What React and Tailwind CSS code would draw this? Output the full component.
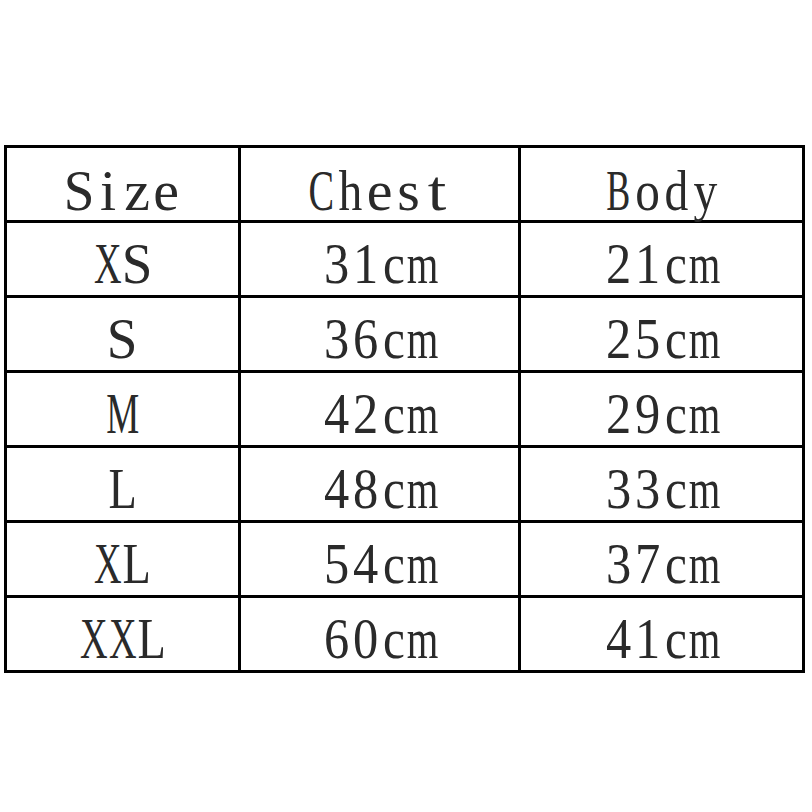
import React from "react";

const SCALE = {
  S: "scale-x-[0.95]",
  i: "scale-x-100",
  z: "scale-x-100",
  e: "scale-x-100",
  C: "scale-x-[0.66]",
  h: "scale-x-[0.82]",
  s: "scale-x-100",
  t: "scale-x-[1.15]",
  B: "scale-x-[0.62]",
  o: "scale-x-[0.85]",
  d: "scale-x-[0.82]",
  y: "scale-x-[0.82]",
  X: "scale-x-[0.66]",
  M: "scale-x-[0.64]",
  L: "scale-x-[0.8]",
  c: "scale-x-[0.85]",
  m: "scale-x-[0.7]",
};

function Mono({ text }) {
  return (
    <div className="flex">
      {text.split("").map((ch, i) => (
        <span key={i} className="w-[29px] flex justify-center">
          <span className={"inline-block " + (SCALE[ch] || "scale-x-[0.87]")}>{ch}</span>
        </span>
      ))}
    </div>
  );
}

const rows = [
  ["Size", "Chest", "Body"],
  ["XS", "31cm", "21cm"],
  ["S", "36cm", "25cm"],
  ["M", "42cm", "29cm"],
  ["L", "48cm", "33cm"],
  ["XL", "54cm", "37cm"],
  ["XXL", "60cm", "41cm"],
];

export default function App() {
  return (
    <div className="w-[812px] h-[812px] bg-white pt-[145px] pl-[4px]">
      <div
        className="w-[801px] border-[3px] border-black text-[58px] leading-none text-[#2a2a2a]"
        style={{ fontFamily: '"Liberation Serif", "Times New Roman", serif' }}
      >
        {rows.map((r, idx) => (
          <div
            key={idx}
            className={idx === 0 ? "flex h-[72px]" : "flex h-[75px] border-t-[3px] border-black"}
          >
            <div className={"w-[231px] flex justify-center " + (idx === 0 ? "pt-[14px]" : "pt-[12px]")}>
              <Mono text={r[0]} />
            </div>
            <div className={"w-[280px] border-l-[3px] border-black flex justify-center " + (idx === 0 ? "pt-[14px]" : "pt-[12px]")}>
              <Mono text={r[1]} />
            </div>
            <div className={"flex-1 border-l-[3px] border-black flex justify-center " + (idx === 0 ? "pt-[14px]" : "pt-[12px]")}>
              <Mono text={r[2]} />
            </div>
          </div>
        ))}
      </div>
    </div>
  );
}
